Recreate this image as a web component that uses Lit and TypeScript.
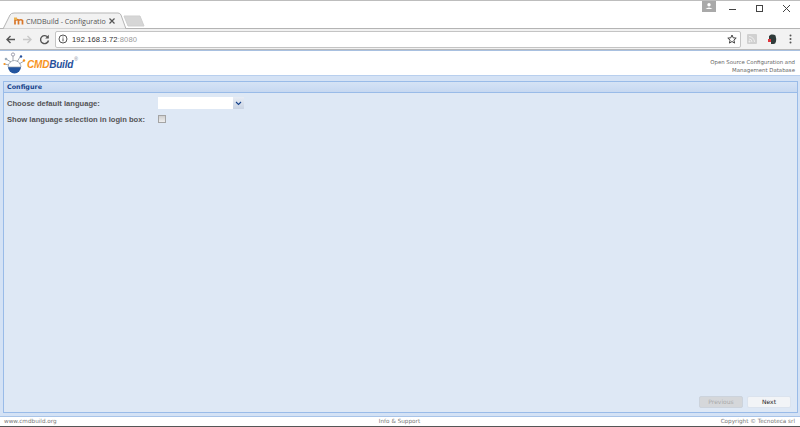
import { LitElement, html, css } from "lit";
import { customElement } from "lit/decorators.js";

@customElement("app-root")
export class AppRoot extends LitElement {
  static styles = css`
    :host { display: block; width: 800px; height: 427px; overflow: hidden; background: #dee8f5; font-family: "DejaVu Sans", sans-serif; }
    .page { display: flex; flex-direction: column; height: 427px; }
    .tabstrip { height: 28px; flex: none; background: #fff; border-top: 1px solid #bdbdbd; box-sizing: border-box; display: flex; align-items: flex-end; position: relative; }
    .tabs { display: block; position: absolute; left: 0; top: 0; }
    .tabtext { position: absolute; left: 26px; top: 13px; white-space: nowrap; font: 7.1px/14px "Open Sans", sans-serif; color: #555; }
    .wincontrols { margin-left: auto; align-self: flex-start; display: flex; align-items: flex-start; }
    .user { width: 14px; height: 11px; background: #a9a9a9; margin-right: 3px; display: flex; justify-content: center; }
    .wbtn { width: 27px; height: 16px; display: flex; justify-content: center; align-items: center; }
    .toolbar { height: 22px; flex: none; background: #f2f2f2; border-top: 1px solid #b4b4b4; border-bottom: 1px solid #b9b9b9; box-sizing: border-box; display: flex; align-items: center; padding-left: 2px; }
    .nav { width: 17px; height: 17px; display: flex; align-items: center; justify-content: center; flex: none; }
    .omni { width: 686px; height: 17px; box-sizing: border-box; margin-left: 2px; background: #fff; border: 1px solid #c4c4c4; border-radius: 2px; display: flex; align-items: center; padding: 0 3px 0 2px; font: 7.6px/15px "Liberation Sans", sans-serif; color: #333; }
    .omni .host { margin-left: 4px; letter-spacing: 0.1px; }
    .omni .port { color: #999; }
    .omni .star { margin-left: auto; display: flex; }
    .ext { display: flex; align-items: center; margin-left: 6px; }
    .note { margin: 0 12px 0 10px; }
    .header { height: 26px; flex: none; box-sizing: border-box; background: #fff; border-top: 1px solid #a8c0e0; border-bottom: 1px solid #b8cfee; display: flex; justify-content: space-between; padding: 0 5px 0 3px; }
    .logo { display: flex; align-items: center; }
    .logotext { font: italic bold 10px/12px "Liberation Sans", sans-serif; margin: 3px 0 0 1px; letter-spacing: -0.2px; }
    .cmd { color: #f7941d; }
    .build { color: #27509b; }
    .reg { font: 5px/5px "Liberation Sans", sans-serif; color: #789; align-self: flex-start; margin: 6px 0 0 1px; }
    .claim { text-align: right; font: 5.4px/8px "DejaVu Sans", sans-serif; color: #666; margin-top: 7px; }
    .body { flex: 1; min-height: 0; background: #d4e2f5; padding: 5px 2px 3px 3px; display: flex; flex-direction: column; }
    .panel { flex: 1; min-height: 0; border: 1px solid #99bbe8; background: #dee8f5; display: flex; flex-direction: column; }
    .ptitle { height: 10px; flex: none; background: linear-gradient(#d5e3f5, #c6d8f1); border-bottom: 1px solid #99bbe8; font: bold 6.4px/10px "DejaVu Sans", sans-serif; color: #15428b; padding-left: 3px; }
    .form { flex: 1; min-height: 0; padding: 4px 0 0 3px; display: flex; flex-direction: column; gap: 6px; }
    .row { display: flex; align-items: center; font: bold 7.6px/11px "Liberation Sans", sans-serif; color: #555; }
    .row.first { height: 12px; }
    .row.second { height: 8px; }
    .label { width: 151px; flex: none; white-space: nowrap; }
    .combo { width: 75px; height: 12px; background: #fff; box-sizing: border-box; }
    .trigger { width: 11px; height: 12px; background: linear-gradient(#e8edf5, #c9d3e3); display: flex; align-items: center; justify-content: center; }
    .check { width: 6px; height: 6px; border: 1px solid #a4a4a4; background: linear-gradient(#cfcfcf, #eee); }
    .actions { margin-top: auto; display: flex; justify-content: flex-end; gap: 4px; padding: 0 6px 4px 0; }
    .btn { width: 44px; height: 12px; box-sizing: border-box; border-radius: 2px; border: 1px solid #dbe3ee; font: 6px/10px "DejaVu Sans", sans-serif; text-align: center; background: #f2f4f7; color: #222; }
    .btn.off { background: #d5d7da; color: #aaa; border-color: #ccd3dc; }
    .footer { height: 11px; flex: none; background: #fff; border-top: 1px solid #a8c4e8; border-bottom: 1px solid #555; box-sizing: border-box; display: grid; grid-template-columns: 1fr 1fr 1fr; align-items: center; padding: 0 5px 0 4px; font: 5.7px/9px "DejaVu Sans", sans-serif; color: #777; }
    .footer .mid { text-align: center; }
    .footer .end { text-align: right; }
  `;

  render() {
    return html`<div class="page">
      <div class="tabstrip">
        <svg class="tabs" width="150" height="28" viewBox="0 0 150 28">
          <path d="M3 28 L10 14 Q11 12 14 12 L118 12 Q120 12 121 14 L126 28 Z" fill="#f2f2f2" stroke="#b5b5b5"/>
          <path d="M124 15 L140 15 L144 25 L128 25 Z" fill="#d6d6d6" stroke="#cfcfcf"/>
          <path d="M15 23.500 v-4 q2.500-1.500 3.500 0 v4 M18.500 19.500 q2.500-1.500 4 0 v4" fill="none" stroke="#d9772a" stroke-width="1.700"/>
          <rect x="14" y="16.500" width="3" height="2.500" fill="#e9b04e"/>
          <path d="M109.500 17.500 l5 5 M114.500 17.500 l-5 5" stroke="#555" stroke-width="1.200"/>
        </svg>
        <span class="tabtext">CMDBuild - Configuratio</span>
        <div class="wincontrols">
          <div class="user"><svg width="10" height="10" viewBox="0 0 10 10"><circle cx="5" cy="3.800" r="1.700" fill="#fff"/><path d="M1.500 8 q3.500-3 7 0z" fill="#fff"/></svg></div>
          <div class="wbtn"><svg width="10" height="10"><path d="M1 5.500h7" stroke="#444" stroke-width="1"/></svg></div>
          <div class="wbtn"><svg width="10" height="10"><rect x="1.500" y="1.500" width="6" height="6" fill="none" stroke="#444"/></svg></div>
          <div class="wbtn"><svg width="10" height="10"><path d="M1 1l7 7M8 1l-7 7" stroke="#444" stroke-width="1"/></svg></div>
        </div>
      </div>
      <div class="toolbar">
        <div class="nav"><svg width="11" height="11"><path d="M10 5.500H2M5.500 2L2 5.500 5.500 9" fill="none" stroke="#555" stroke-width="1.400"/></svg></div>
        <div class="nav"><svg width="11" height="11"><path d="M1 5.500H9M5.500 2L9 5.500 5.500 9" fill="none" stroke="#c8c8c8" stroke-width="1.400"/></svg></div>
        <div class="nav"><svg width="11" height="11"><path d="M9 3.500A4 4 0 1 0 9.500 6.500" fill="none" stroke="#555" stroke-width="1.400"/><path d="M9.800 0.800v3.600H6.200z" fill="#555"/></svg></div>
        <div class="omni">
          <svg width="10" height="10"><circle cx="5" cy="5" r="4" fill="none" stroke="#555"/><path d="M5 4.300v3M5 2.500v1" stroke="#555"/></svg>
          <span class="host">192.168.3.72<span class="port">:8080</span></span>
          <span class="star"><svg width="10" height="10" viewBox="0 0 10 10"><path d="M5 1l1.200 2.800 3 .3-2.300 2 .7 3L5 7.500 2.400 9.100l.7-3-2.300-2 3-.3z" fill="none" stroke="#444"/></svg></span>
        </div>
        <div class="ext">
          <svg width="10" height="10"><rect width="10" height="10" rx="1" fill="#d0d0d0"/><path d="M2 5a3 3 0 0 1 3 3M2 2.500A5.500 5.500 0 0 1 7.500 8" fill="none" stroke="#eee"/><circle cx="2.500" cy="7.500" r="1" fill="#eee"/></svg>
          <svg class="note" width="10" height="11"><path d="M2 2l2-1.500q3-.5 4.500 1q1 3 .5 6q-.5 2.500-2.500 2.500H4V8L2 6z" fill="#2f3b3a"/><rect x="1" y="5" width="3" height="3" fill="#e0343c"/></svg>
          <svg width="3" height="10"><circle cx="1.500" cy="1.500" r="1" fill="#555"/><circle cx="1.500" cy="5" r="1" fill="#555"/><circle cx="1.500" cy="8.500" r="1" fill="#555"/></svg>
        </div>
      </div>
      <div class="header">
        <div class="logo">
          <svg width="23" height="24" viewBox="0 0 23 24">
            <path d="M5 16a6.500 6.500 0 0 0 13 0z" fill="#23559f"/>
            <path d="M5 16a6.500 6.500 0 0 1 13 0z" fill="#fff" stroke="#8f99a6" stroke-width=".7"/>
            <g stroke="#8a9099" stroke-width=".8" fill="none"><path d="M8 11L3 8M10 10V5M14 11l3-5M16 13l5-3M6 14L1.500 13"/></g>
            <circle cx="10" cy="3.500" r="1.600" fill="none" stroke="#889" stroke-width=".8"/>
            <circle cx="3" cy="8" r="1.300" fill="#9ab"/><circle cx="18" cy="5.500" r="1.200" fill="#27509b"/>
            <circle cx="21" cy="9.500" r="1.200" fill="#f7941d"/><circle cx="1.500" cy="13" r="1.100" fill="#f7941d"/>
          </svg>
          <span class="logotext"><span class="cmd">CMD</span><span class="build">Build</span></span>
          <span class="reg">®</span>
        </div>
        <div class="claim">Open Source Configuration and<br />Management Database</div>
      </div>
      <div class="body">
        <div class="panel">
          <div class="ptitle">Configure</div>
          <div class="form">
            <div class="row first">
              <span class="label">Choose default language:</span>
              <div class="combo"></div>
              <div class="trigger"><svg width="7" height="5"><path d="M1 1l2.500 2.500L6 1" fill="none" stroke="#15428b" stroke-width="1.100"/></svg></div>
            </div>
            <div class="row second">
              <span class="label">Show language selection in login box:</span>
              <div class="check"></div>
            </div>
            <div class="actions">
              <div class="btn off">Previous</div>
              <div class="btn">Next</div>
            </div>
          </div>
        </div>
      </div>
      <div class="footer"><span>www.cmdbuild.org</span><span class="mid">Info &amp; Support</span><span class="end">Copyright © Tecnoteca srl</span></div>
    </div>`;
  }
}
